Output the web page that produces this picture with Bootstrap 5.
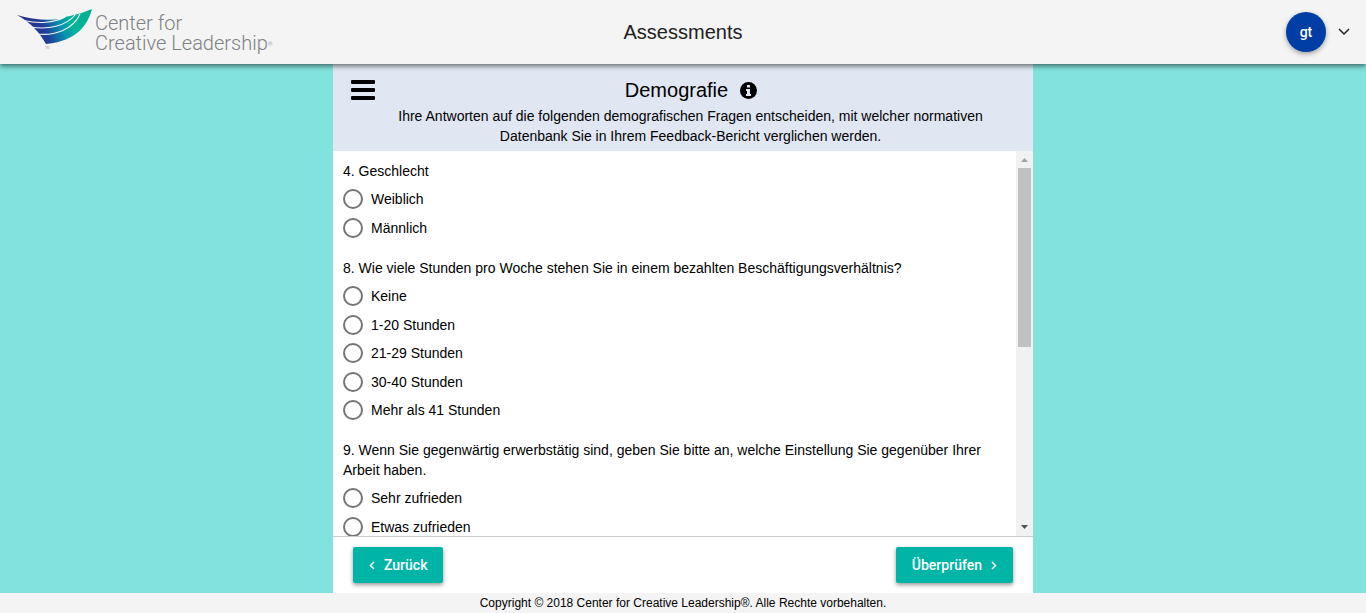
<!DOCTYPE html>
<html lang="de">
<head>
<meta charset="utf-8">
<meta name="viewport" content="width=device-width, initial-scale=1">
<title>Assessments – Demografie</title>
<link href="https://cdn.jsdelivr.net/npm/bootstrap@5.3.0/dist/css/bootstrap.min.css" rel="stylesheet">
<style>
body { font-family: "Liberation Sans", Arial, sans-serif; font-size: 14px; line-height: 20px; color: #000; background: #82e2dc; }
.app-bar { height: 64px; background: #f4f4f4; box-shadow: 0 2px 5px rgba(0,0,0,.55); padding: 0 16px; z-index: 2; }
.app-title { font-size: 20px; line-height: 24px; color: #212121; }
.side { flex: 1 1 0; }
.brand { color: #7d8284; font-family: Roboto, sans-serif; font-weight: 300; font-size: 20px; line-height: 20px; gap: 3px; }
.brand-mark { width: 76px; height: 46px; }
.brand-name { padding-top: 2px; }
.brand-reg { font-size: 6px; line-height: 6px; vertical-align: 4px; }
.avatar { width: 40px; height: 40px; background: #003da5; font-family: Roboto, sans-serif; font-weight: 500; box-shadow: 0 2px 5px rgba(0,0,0,.35); }
.user-menu { gap: 12px; }
.survey { width: 100%; max-width: 700px; }
.survey-head { background: #e0e7f3; padding: 14px 18px 5px; }
.survey-head h1 { font-size: 20px; line-height: 24px; gap: 12px; padding-right: 8px; }
.survey-intro { padding: 0 8px 0 23px; margin-top: 4px; }
.menu-btn { width: 24px; height: 24px; }
.questions { scrollbar-width: none; padding: 10px 10px 0; }
.questions::-webkit-scrollbar { display: none; }
.question { margin-bottom: 16px; }
.question legend { font-size: 14px; line-height: 20px; margin-bottom: 4px; }
.option { height: 28px; gap: 8px; }
.option:nth-of-type(even) { margin-top: 1px; }
.option input { appearance: none; width: 20px; height: 20px; border: 2px solid #757575; border-radius: 50%; margin: 0; }
.option input:checked { background: radial-gradient(#00b5a5 0 5px, #fff 6px); }
.rail { width: 17px; background: #f1f1f1; }
.rail svg { width: 17px; height: 17px; }
.rail-thumb { height: 51%; width: 13px; background: #c1c1c1; }
.survey-foot { height: 57px; border-top: 1px solid #ccc; padding: 0 20px; }
.btn-step { height: 36px; padding: 0 16px; border: 0; border-radius: 2px; background: #00b5a5; color: #fff; font-size: 14px; line-height: 20px; font-family: Roboto, sans-serif; font-weight: 500; box-shadow: 0 2px 4px rgba(0,0,0,.4); gap: 9px; }
.btn-step:hover { background: #009d90; color: #fff; }
.copyright { background: #f4f4f4; font-size: 12px; }
</style>
</head>
<body class="vh-100 d-flex flex-column overflow-hidden">
<header class="app-bar d-flex align-items-center position-relative flex-shrink-0">
  <div class="side">
    <a href="#" class="brand d-flex align-items-center text-decoration-none">
      <svg class="brand-mark flex-shrink-0" viewBox="0 0 76 46" aria-hidden="true">
        <defs><linearGradient id="wing" x1="0" x2="1" y1=".2" y2="0"><stop offset="0" stop-color="#2b2a80"/><stop offset=".28" stop-color="#203f9a"/><stop offset=".5" stop-color="#078fb0"/><stop offset=".66" stop-color="#00b39b"/><stop offset="1" stop-color="#00af8f"/></linearGradient></defs>
        <path fill="url(#wing)" d="M1 6C14 10 30 12 46 10Q50 7 54 7Q65 5 76 0C72 14 63 32 30 35C24 24 14 13 1 6Z"/>
        <path fill="none" stroke="#f4f4f4" stroke-width="1.1" d="M8 11.500C22 15 38 14 49 8M15 18C32 21 50 17 59 6M21 25C38 27 57 21 64 5"/>
        <text x="29" y="40" font-size="3" fill="#777">TM</text>
      </svg>
      <span class="brand-name">Center for<br>Creative Leadership<span class="brand-reg">®</span></span>
    </a>
  </div>
  <div class="app-title">Assessments</div>
  <div class="side user-menu d-flex justify-content-end align-items-center">
    <span class="avatar rounded-circle d-flex align-items-center justify-content-center text-white">gt</span>
    <button type="button" class="btn p-0 border-0 d-flex" aria-label="Benutzermenü"><svg width="12" height="8" viewBox="0 0 12 8"><path d="M1 1l5 5 5-5" fill="none" stroke="#222" stroke-width="1.5"/></svg></button>
  </div>
</header>
<main class="survey mx-auto bg-white d-flex flex-column flex-fill overflow-hidden">
  <div class="survey-head">
    <div class="d-flex align-items-center">
      <button type="button" class="menu-btn btn p-0 border-0 d-flex" aria-label="Menü"><svg width="24" height="24" viewBox="0 0 24 24"><path d="M1 2h22q1 0 1 1v2q0 1-1 1H1q-1 0-1-1V3q0-1 1-1zM1 10h22q1 0 1 1v2q0 1-1 1H1q-1 0-1-1v-2q0-1 1-1zM1 18h22q1 0 1 1v2q0 1-1 1H1q-1 0-1-1v-2q0-1 1-1z"/></svg></button>
      <h1 class="d-flex align-items-center justify-content-center flex-fill mb-0 fw-normal">Demografie
        <svg width="17" height="17" viewBox="0 0 17 17" role="img" aria-label="Info"><circle cx="8.500" cy="8.500" r="8.500"/><path fill="#e0e7f3" d="M7 3h3v2.500H7zM6 7h4v5h1v2H6v-2h1V9H6z"/></svg>
      </h1>
    </div>
    <p class="survey-intro text-center mb-0">Ihre Antworten auf die folgenden demografischen Fragen entscheiden, mit welcher normativen Datenbank Sie in Ihrem Feedback-Bericht verglichen werden.</p>
  </div>
  <div class="d-flex flex-fill overflow-hidden">
    <form class="questions flex-fill overflow-auto">
      <fieldset class="question"><legend>4. Geschlecht</legend>
        <label class="option d-flex align-items-center"><input type="radio" name="q4">Weiblich</label>
        <label class="option d-flex align-items-center"><input type="radio" name="q4">Männlich</label>
      </fieldset>
      <fieldset class="question"><legend>8. Wie viele Stunden pro Woche stehen Sie in einem bezahlten Beschäftigungsverhältnis?</legend>
        <label class="option d-flex align-items-center"><input type="radio" name="q8">Keine</label>
        <label class="option d-flex align-items-center"><input type="radio" name="q8">1-20 Stunden</label>
        <label class="option d-flex align-items-center"><input type="radio" name="q8">21-29 Stunden</label>
        <label class="option d-flex align-items-center"><input type="radio" name="q8">30-40 Stunden</label>
        <label class="option d-flex align-items-center"><input type="radio" name="q8">Mehr als 41 Stunden</label>
      </fieldset>
      <fieldset class="question"><legend>9. Wenn Sie gegenwärtig erwerbstätig sind, geben Sie bitte an, welche Einstellung Sie gegenüber Ihrer Arbeit haben.</legend>
        <label class="option d-flex align-items-center"><input type="radio" name="q9">Sehr zufrieden</label>
        <label class="option d-flex align-items-center"><input type="radio" name="q9">Etwas zufrieden</label>
      </fieldset>
    </form>
    <div class="rail d-flex flex-column align-items-center flex-shrink-0" aria-hidden="true">
      <svg class="flex-shrink-0" viewBox="0 0 17 17"><path fill="#a3a3a3" d="M5 11l3.500-4 3.500 4z"/></svg>
      <div class="flex-fill"><div class="rail-thumb"></div></div>
      <svg class="flex-shrink-0" viewBox="0 0 17 17"><path fill="#505050" d="M5 6l3.500 4 3.500-4z"/></svg>
    </div>
  </div>
  <div class="survey-foot d-flex align-items-center justify-content-between flex-shrink-0">
    <button type="button" class="btn btn-step d-flex align-items-center"><svg width="6" height="9" viewBox="0 0 6 9"><path d="M5 1L1.500 4.500 5 8" fill="none" stroke="#fff" stroke-width="1.500"/></svg>Zurück</button>
    <button type="button" class="btn btn-step d-flex align-items-center">Überprüfen<svg width="6" height="9" viewBox="0 0 6 9"><path d="M1 1l3.500 3.500L1 8" fill="none" stroke="#fff" stroke-width="1.500"/></svg></button>
  </div>
</main>
<footer class="copyright text-center flex-shrink-0">Copyright © 2018 Center for Creative Leadership®. Alle Rechte vorbehalten.</footer>
<script src="https://cdn.jsdelivr.net/npm/bootstrap@5.3.0/dist/js/bootstrap.bundle.min.js"></script>
</body>
</html>
